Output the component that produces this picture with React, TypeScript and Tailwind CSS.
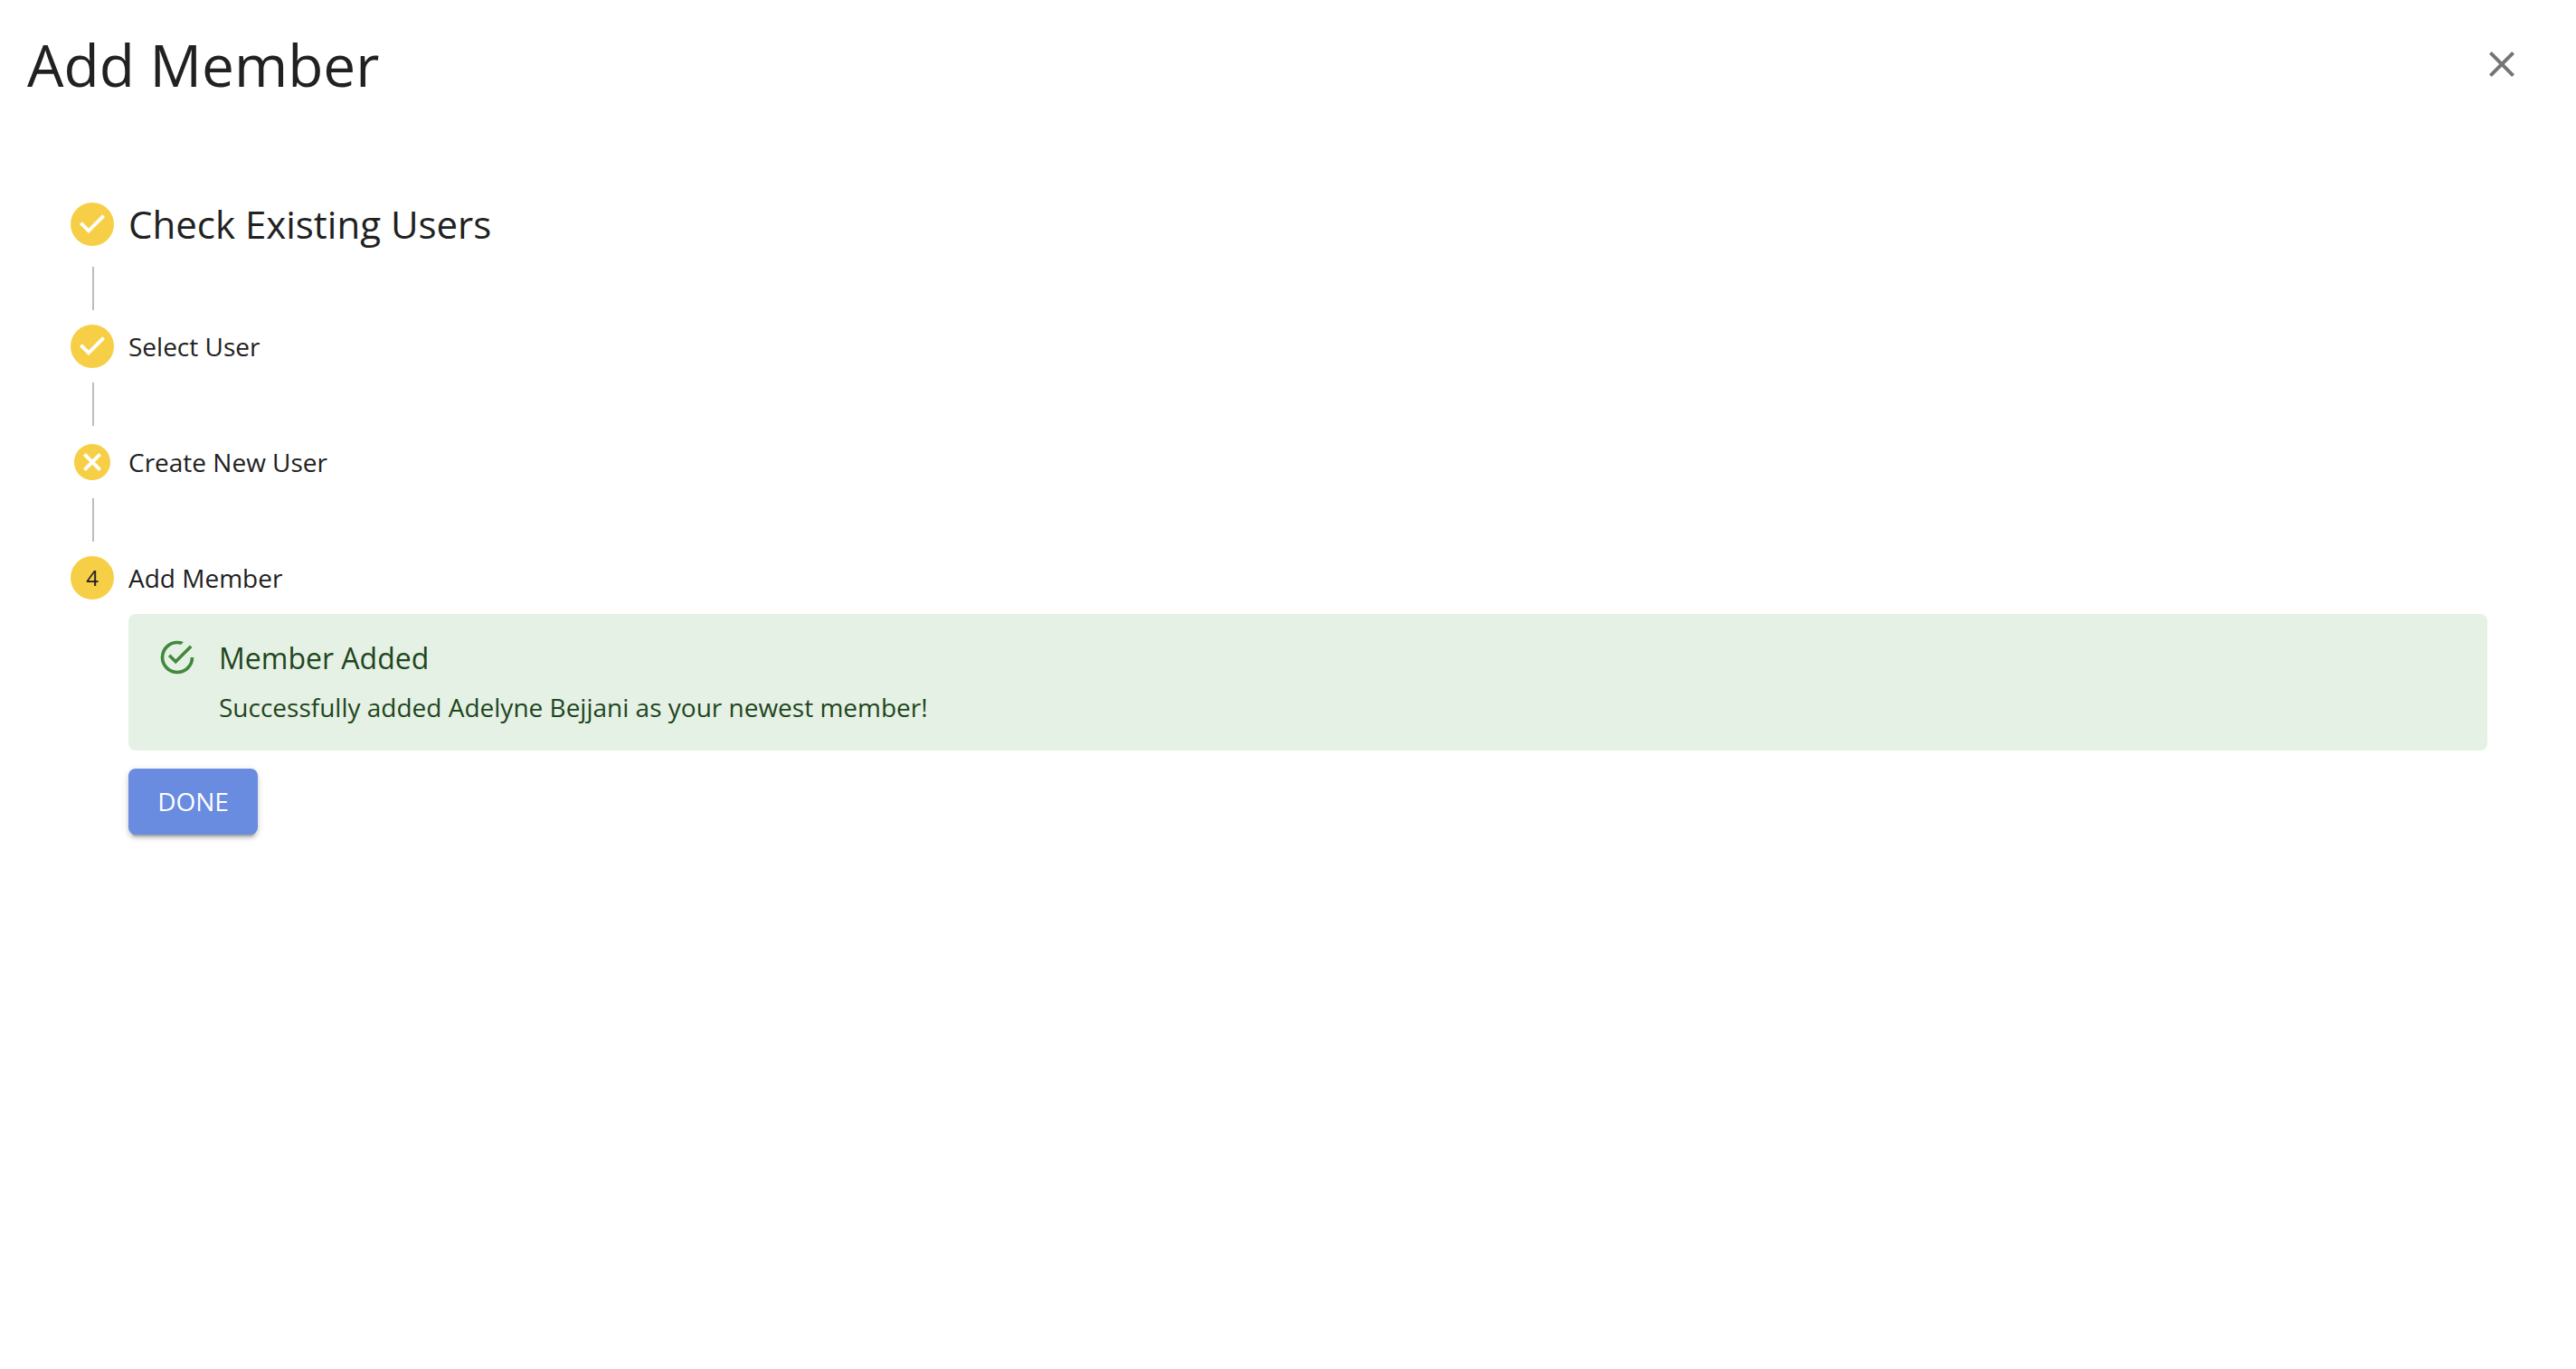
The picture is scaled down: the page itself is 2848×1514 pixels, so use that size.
const CHECK = "M12 0a12 12 0 1 0 0 24 12 12 0 0 0 0-24zm-2 17l-5-5 1.4-1.4 3.6 3.6 7.6-7.6L19 8l-9 9z";
const CANCEL =
  "M12 2C6.47 2 2 6.47 2 12s4.47 10 10 10 10-4.47 10-10S17.53 2 12 2zm5 13.59L15.59 17 12 13.41 8.41 17 7 15.59 10.59 12 7 8.41 8.41 7 12 10.59 15.59 7 17 8.41 13.41 12 17 15.59z";
const CLOSE = "M19 6.41 17.59 5 12 10.59 6.41 5 5 6.41 10.59 12 5 17.59 6.41 19 12 13.41 17.59 19 19 17.59 13.41 12z";
const CIRCLE_OUTLINE =
  "M20 12a8 8 0 0 1-8 8 8 8 0 0 1-8-8 8 8 0 0 1 8-8c.76 0 1.5.11 2.2.31l1.57-1.57A9.822 9.822 0 0 0 12 2 10 10 0 0 0 2 12a10 10 0 0 0 10 10 10 10 0 0 0 10-10M7.91 10.08 6.5 11.5 11 16 21 6l-1.41-1.42L11 13.17l-3.09-3.09Z";

const StepIcon = ({ path }: { path: string }) => (
  <svg viewBox="0 0 24 24" className="w-[48px] h-[48px] shrink-0 fill-[#f7cf46]">
    <circle cx="12" cy="12" r="8" className="fill-white" />
    <path d={path} />
  </svg>
);

const Connector = () => <div className="ml-[24px] my-[16px] h-[48px] w-[2px] bg-[#bdbdbd]" />;

export default function App() {
  return (
    <div className="min-h-screen bg-white text-[#212121] font-['Open_Sans',sans-serif]">
      <header className="flex h-[140px] items-center justify-between pl-[30px] pr-[58px]">
        <h1 className="pt-[3px] text-[64px] leading-none font-normal">Add Member</h1>
        <svg viewBox="0 0 24 24" className="mt-[2px] w-[48px] h-[48px] fill-[#757575]">
          <path d={CLOSE} />
        </svg>
      </header>

      <div className="pl-[78px] pr-[98px] pt-[77px]">
        <div className="flex h-[62px] items-center gap-[16px]">
          <StepIcon path={CHECK} />
          <span className="text-[42px] leading-none">Check Existing Users</span>
        </div>
        <Connector />
        <div className="flex h-[48px] items-center gap-[16px]">
          <StepIcon path={CHECK} />
          <span className="text-[28px] leading-none">Select User</span>
        </div>
        <Connector />
        <div className="flex h-[48px] items-center gap-[16px]">
          <StepIcon path={CANCEL} />
          <span className="text-[28px] leading-none">Create New User</span>
        </div>
        <Connector />
        <div className="flex h-[48px] items-center gap-[16px]">
          <div className="flex h-[48px] w-[48px] items-center justify-center rounded-full bg-[#f7cf46] text-[24px] text-[#1f1f1f]">
            4
          </div>
          <span className="text-[28px] leading-none">Add Member</span>
        </div>

        <div className="ml-[64px] mt-[16px]">
          <div className="flex h-[151px] gap-[24px] rounded-[8px] bg-[#e6f1e5] pl-[32px] pt-[26px] text-[#1e4620]">
            <svg viewBox="0 0 24 24" className="w-[44px] h-[44px] shrink-0 fill-[#43883d]">
              <path d={CIRCLE_OUTLINE} />
            </svg>
            <div>
              <div className="-mt-[1px] text-[32px] leading-[48px]">Member Added</div>
              <div className="mt-[9px] text-[28px] leading-[42px]">
                Successfully added Adelyne Bejjani as your newest member!
              </div>
            </div>
          </div>
          <button className="mt-[20px] h-[73px] w-[143px] rounded-[8px] bg-[#698be0] pb-[2px] text-[28px] text-white shadow-[0_6px_2px_-4px_rgba(0,0,0,0.2),0_4px_4px_0_rgba(0,0,0,0.14),0_2px_10px_0_rgba(0,0,0,0.12)]">
            DONE
          </button>
        </div>
      </div>
    </div>
  );
}
